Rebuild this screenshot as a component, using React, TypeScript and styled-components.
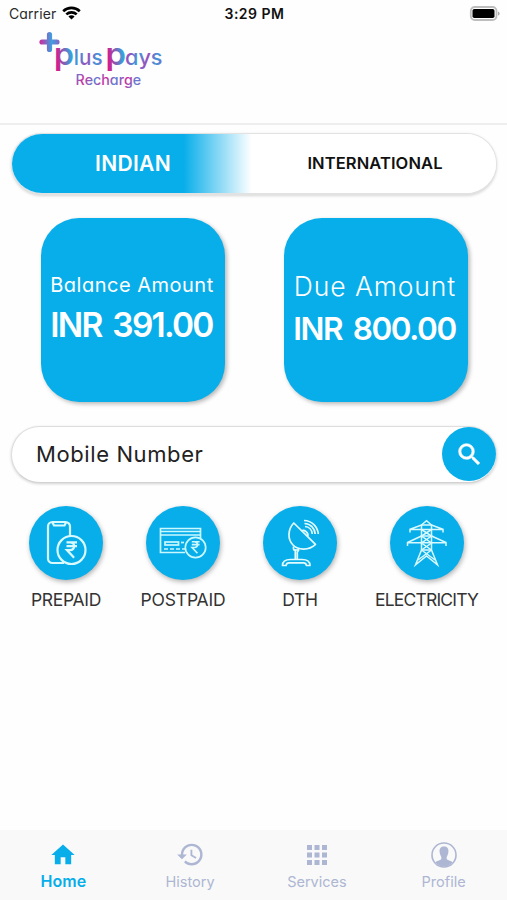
import React from "react";
import styled, { createGlobalStyle } from "styled-components";
import { MdHome, MdHistory, MdApps, MdSearch } from "react-icons/md";

const BLUE = "#08aeea";
const MUTED = "#adb6d2";

const GlobalStyle = createGlobalStyle`
  * { box-sizing: border-box; }
  body {
    margin: 0;
    background: #fff;
    font-family: Inter, "Open Sans", sans-serif;
    font-feature-settings: "cv11";
    font-kerning: normal;
  }
`;

const Screen = styled.div`
  width: 507px;
  height: 900px;
  display: flex;
  flex-direction: column;
  background: #fefefe;
  overflow: hidden;
`;

const StatusBar = styled.div`
  height: 28px;
  flex: none;
  display: grid;
  grid-template-columns: 1fr auto 1fr;
  align-items: center;
  padding: 0 7px 0 9px;
  color: #111;
  font-size: 14px;
  line-height: 28px;
`;

const Carrier = styled.div`
  display: flex;
  align-items: center;
  gap: 6px;
  letter-spacing: 0.1px;
  color: #2a2a2a;
  svg { margin-top: -2px; }
`;

const Clock = styled.div`
  font-weight: 600;
  letter-spacing: 0.5px;
`;

const Battery = styled.div`
  display: flex;
  justify-content: flex-end;
  margin-top: -1px;
`;

const Header = styled.header`
  height: 97px;
  flex: none;
  padding-left: 36px;
  border-bottom: 2px solid #eeeeee;
  svg { display: block; }
`;

const Main = styled.main`
  flex: 1;
  display: flex;
  flex-direction: column;
`;

const Segments = styled.div`
  display: grid;
  grid-template-columns: 1fr 1fr;
  height: 62px;
  margin: 8px 10px 0 11px;
  border: 1px solid #e2e2e2;
  border-bottom-width: 2px;
  border-radius: 31px;
  overflow: hidden;
  background: #fff;
  box-shadow: 0 1px 3px rgba(0, 0, 0, 0.16);
`;

const Segment = styled.div<{ $active?: boolean }>`
  text-align: center;
  line-height: 59px;
  font-weight: 600;
  color: ${(p) => (p.$active ? "#fff" : "#111")};
  font-size: ${(p) => (p.$active ? 21 : 16.5)}px;
  letter-spacing: ${(p) => (p.$active ? 0.3 : 0.1)}px;
  background: ${(p) => (p.$active ? `linear-gradient(90deg, ${BLUE} 71%, #fff 99%)` : "#fff")};
`;

const Cards = styled.div`
  display: flex;
  gap: 59px;
  padding: 23px 0 0 40.5px;
`;

const Card = styled.div`
  width: 184px;
  height: 184px;
  border-radius: 38px;
  background: ${BLUE};
  color: #fff;
  display: flex;
  flex-direction: column;
  align-items: center;
  justify-content: center;
  white-space: nowrap;
  box-shadow: 2px 2px 4px rgba(0, 0, 0, 0.28);
`;

const CardLabel = styled.div<{ $large?: boolean }>`
  font-size: ${(p) => (p.$large ? 26.5 : 20)}px;
  line-height: ${(p) => (p.$large ? 38 : 29)}px;
  letter-spacing: ${(p) => (p.$large ? 0.9 : 0.5)}px;
  font-weight: ${(p) => (p.$large ? 350 : 400)};
  margin-right: 1px;
`;

const CardValue = styled.div<{ $large?: boolean }>`
  font-size: ${(p) => (p.$large ? 33.5 : 31.5)}px;
  line-height: ${(p) => (p.$large ? 50 : 48)}px;
  letter-spacing: ${(p) => (p.$large ? -1.75 : -1.4)}px;
  word-spacing: 4px;
  font-weight: 600;
  margin-right: 2px;
`;

const SearchBar = styled.div`
  display: flex;
  align-items: center;
  justify-content: space-between;
  height: 57px;
  margin: 24px 10px 0 11px;
  padding: 0 0 1px 24px;
  border: 1px solid #dedede;
  border-bottom-color: #d2d2d2;
  border-radius: 29px;
  background: #fff;
  box-shadow: 0 1px 3px rgba(0, 0, 0, 0.18);
  font-size: 22px;
  letter-spacing: 0.6px;
  color: #222;
`;

const SearchButton = styled.div`
  width: 54px;
  height: 54px;
  border-radius: 50%;
  background: ${BLUE};
  color: #fff;
  display: grid;
  place-items: center;
  svg path:last-child { stroke: #fff; stroke-width: 0.5; }
`;

const Services = styled.div`
  display: flex;
  gap: 38px;
  padding: 23px 0 0 29px;
`;

const Service = styled.div<{ $width: number }>`
  width: ${(p) => p.$width}px;
  display: flex;
  flex-direction: column;
  align-items: center;
`;

const ServiceIcon = styled.div`
  width: 74px;
  height: 74px;
  border-radius: 50%;
  background: ${BLUE};
  box-shadow: 1px 2px 5px rgba(0, 0, 0, 0.3);
  svg { display: block; }
`;

const ServiceLabel = styled.div<{ $spacing: number }>`
  font-size: 17.5px;
  line-height: 40px;
  letter-spacing: ${(p) => p.$spacing}px;
  color: #333;
  white-space: nowrap;
`;

const TabBar = styled.nav`
  height: 70px;
  flex: none;
  display: grid;
  grid-template-columns: repeat(4, 1fr);
  background: #f9f9f9;
`;

const Tab = styled.div<{ $active?: boolean }>`
  display: flex;
  flex-direction: column;
  align-items: center;
  padding-top: 9px;
  color: ${(p) => (p.$active ? BLUE : MUTED)};
  font-size: ${(p) => (p.$active ? 16 : 14.5)}px;
  font-weight: ${(p) => (p.$active ? 600 : 400)};
  letter-spacing: 0;
  line-height: ${(p) => (p.$active ? 23 : 24)}px;
`;

const TabIcon = styled.div`
  height: 31px;
  display: grid;
  place-items: center;
`;

function WifiIcon() {
  return (
    <svg width="19" height="14" viewBox="0 0 19 14" fill="none" stroke="#000" strokeWidth="2.6">
      <path d="M1.2 5.2a12 12 0 0 1 16.6 0" />
      <path d="M4.3 8.4a7.6 7.6 0 0 1 10.4 0" />
      <path d="M9.5 13.6 6.4 10.6a4.4 4.4 0 0 1 6.2 0z" fill="#000" stroke="none" />
    </svg>
  );
}

function BatteryIcon() {
  return (
    <svg width="31" height="15" viewBox="0 0 31 15">
      <rect x="1.8" y="1" width="25.7" height="13" rx="4" fill="#fff" stroke="#bdbdbd" strokeWidth="1.8" />
      <rect x="3.5" y="3" width="22" height="9" rx="1.8" fill="#000" />
      <path d="M29 5.4c2.2.8 2.2 3.4 0 4.2z" fill="#aaa" />
    </svg>
  );
}

function Logo() {
  return (
    <svg width="132" height="64" viewBox="36 28 132 64" fontFamily="Inter, sans-serif">
      <defs>
        <linearGradient id="plus" gradientUnits="userSpaceOnUse" x1="39" y1="0" x2="60" y2="0">
          <stop offset="0" stopColor="#d6249a" />
          <stop offset="0.6" stopColor="#3f9fe0" />
          <stop offset="1" stopColor="#8a5fc7" />
        </linearGradient>
        <linearGradient id="bigP" x1="0" y1="0.6" x2="1" y2="0.45">
          <stop offset="0.1" stopColor="#d9178c" />
          <stop offset="0.85" stopColor="#34a3dd" />
        </linearGradient>
        <linearGradient id="letters" gradientUnits="userSpaceOnUse" spreadMethod="reflect" x1="77" y1="0" x2="86" y2="3">
          <stop offset="0" stopColor="#3f98dc" />
          <stop offset="1" stopColor="#9a4fbb" />
        </linearGradient>
        <linearGradient id="small" gradientUnits="userSpaceOnUse" spreadMethod="reflect" x1="76" y1="0" x2="85" y2="4">
          <stop offset="0" stopColor="#cf2c9c" />
          <stop offset="1" stopColor="#5b83d6" />
        </linearGradient>
      </defs>
      <path d="M42 42h15M49.5 34.5v15" stroke="url(#plus)" strokeWidth="5.2" strokeLinecap="round" />
      <text x="54" y="65.4" fontSize="31" textLength="20" lengthAdjust="spacingAndGlyphs" fontWeight="600" fill="url(#bigP)">p</text>
      <text x="73.8" y="65" fontSize="21.5" textLength="28.8" lengthAdjust="spacingAndGlyphs" fontWeight="500" fill="url(#letters)">lus</text>
      <text x="105.5" y="65.4" fontSize="31" textLength="20.5" lengthAdjust="spacingAndGlyphs" fontWeight="600" fill="url(#bigP)">p</text>
      <text x="125" y="65" fontSize="21" textLength="37.5" lengthAdjust="spacingAndGlyphs" fontWeight="500" fill="url(#letters)">ays</text>
      <text x="75.6" y="85" fontSize="14" textLength="65.5" lengthAdjust="spacingAndGlyphs" fontWeight="500" fill="url(#small)">Recharge</text>
    </svg>
  );
}

function Rupee({ x, y, s }: { x: number; y: number; s: number }) {
  return (
    <path
      transform={`translate(${x} ${y}) scale(${s})`}
      d="M-5-7.5H5.5M-5-3.7H5.5M-5-7.5h3.5c5.6 0 5.6 7.8 0 7.8H-4.6L2.6 8"
      strokeWidth="2.2"
    />
  );
}

function PrepaidIcon() {
  return (
    <svg width="74" height="74" viewBox="0 0 74 74" fill="none" stroke="#d9fbff" strokeWidth="2.2">
      <path d="M41 30V20.5a4.5 4.5 0 0 0-4.5-4.5H23.5a4.5 4.5 0 0 0-4.5 4.5v32a4.5 4.5 0 0 0 4.5 4.5H35" />
      <path d="M23.5 16.5l1.5 3h10.5l1.5-3" />
      <circle cx="42.5" cy="44" r="14" />
      <Rupee x={42.5} y={43.8} s={1} />
    </svg>
  );
}

function PostpaidIcon() {
  return (
    <svg width="74" height="74" viewBox="0 0 74 74" fill="none" stroke="#c9f8ff" strokeWidth="1.7">
      <path d="M39 46.5H14.5V22.5h40v9.5" />
      <path d="M14.5 25.5h40M14.5 29h40" />
      <rect x="19" y="36" width="13.5" height="3" />
      <path d="M18 43h22" strokeDasharray="4 2" />
      <path d="M35 36.5h3" />
      <circle cx="49.5" cy="41.5" r="10.2" />
      <Rupee x={49.5} y={41.3} s={0.74} />
    </svg>
  );
}

function DishIcon() {
  return (
    <svg width="74" height="74" viewBox="0 0 74 74" fill="none" stroke="#e2fcff" strokeWidth="1.7" strokeLinejoin="round">
      <path d="M30.8 17 52.5 38.3C46 44.5 35.5 44.5 30 39c-5.5-5.5-5.5-15.5.8-22z" />
      <path d="M39 25c1.5-2.5 7.5 2.500 5.500 5.500" />
      <path d="M42 20.5c4 .3 7 3.300 7.300 7.500M41.500 17.500c6 .2 10.200 4.500 10.700 10.500M41 14.500c8 .3 13.700 6 14.300 13.500" />
      <path d="M30.5 40.5V43l1.8 1.5V53.5M35.5 43v1.5L34.3 46V53.5" />
      <path d="M30.5 44h5" />
      <path d="M27.5 53.5H39c5 0 8 1.5 8 6h-3.5c-.3-2-1-2.7-3-2.7H26c-2 0-2.7.7-3 2.7H19.5c0-4.5 3-6 8-6z" />
    </svg>
  );
}

function TowerIcon() {
  return (
    <svg width="74" height="74" viewBox="0 0 74 74" fill="none" stroke="#d8faff" strokeWidth="1.5">
      <path d="M31.5 19 36.5 14.8 41.5 19V44L47.5 58.8 36.5 50 25.5 58.8 31.5 44z" />
      <path d="M19.5 23.5 31.5 19h10L53.5 23.5zM20 23v3.5M53 23v3.5" />
      <path d="M31.5 30 17 36.8H56.5L41.5 30M17.5 36v4M56 36v4M31.5 30h10M31.5 44h10" />
      <path d="M31.5 23.5l10 6.5-10 7 10 7M41.5 23.5l-10 6.5 10 7-10 7M31.5 44 45 54M41.5 44 28 54" />
    </svg>
  );
}

function ProfileIcon() {
  return (
    <svg width="26" height="26" viewBox="0 0 26 26">
      <circle cx="13" cy="13" r="12" fill="none" stroke="currentColor" strokeWidth="1.6" />
      <path
        d="M13 4.5c3.2 0 4.7 2 4.4 5.3-.2 2.7-1.1 3.8-1.700 5.200-.4 2.300.2 2.700 2.500 3.400 1.600.5 2.700 1 3.400 1.800A11.500 11.500 0 0 1 13 24.500a11.500 11.500 0 0 1-8.600-4.300c.7-.8 1.800-1.300 3.400-1.800 2.300-.7 2.900-1.100 2.500-3.400-.6-1.400-1.500-2.500-1.700-5.200C8.300 6.500 9.800 4.500 13 4.500z"
        fill="currentColor"
      />
    </svg>
  );
}

const services = [
  { label: "PREPAID", width: 74, spacing: -0.3, icon: <PrepaidIcon /> },
  { label: "POSTPAID", width: 84, spacing: -0.2, icon: <PostpaidIcon /> },
  { label: "DTH", width: 74, spacing: -0.3, icon: <DishIcon /> },
  { label: "ELECTRICITY", width: 103, spacing: -0.8, icon: <TowerIcon /> },
];

const tabs = [
  { label: "Home", icon: <MdHome size={28} />, active: true },
  { label: "History", icon: <MdHistory size={29} /> },
  { label: "Services", icon: <MdApps size={30} /> },
  { label: "Profile", icon: <ProfileIcon /> },
];

export default function App() {
  return (
    <Screen>
      <GlobalStyle />
      <StatusBar>
        <Carrier>
          Carrier <WifiIcon />
        </Carrier>
        <Clock>3:29 PM</Clock>
        <Battery>
          <BatteryIcon />
        </Battery>
      </StatusBar>
      <Header>
        <Logo />
      </Header>
      <Main>
        <Segments>
          <Segment $active>INDIAN</Segment>
          <Segment>INTERNATIONAL</Segment>
        </Segments>
        <Cards>
          <Card>
            <CardLabel>Balance Amount</CardLabel>
            <CardValue $large>INR 391.00</CardValue>
          </Card>
          <Card>
            <CardLabel $large>Due Amount</CardLabel>
            <CardValue>INR 800.00</CardValue>
          </Card>
        </Cards>
        <SearchBar>
          Mobile Number
          <SearchButton>
            <MdSearch size={29} />
          </SearchButton>
        </SearchBar>
        <Services>
          {services.map((s) => (
            <Service key={s.label} $width={s.width}>
              <ServiceIcon>{s.icon}</ServiceIcon>
              <ServiceLabel $spacing={s.spacing}>{s.label}</ServiceLabel>
            </Service>
          ))}
        </Services>
      </Main>
      <TabBar>
        {tabs.map((t) => (
          <Tab key={t.label} $active={t.active}>
            <TabIcon>{t.icon}</TabIcon>
            {t.label}
          </Tab>
        ))}
      </TabBar>
    </Screen>
  );
}
